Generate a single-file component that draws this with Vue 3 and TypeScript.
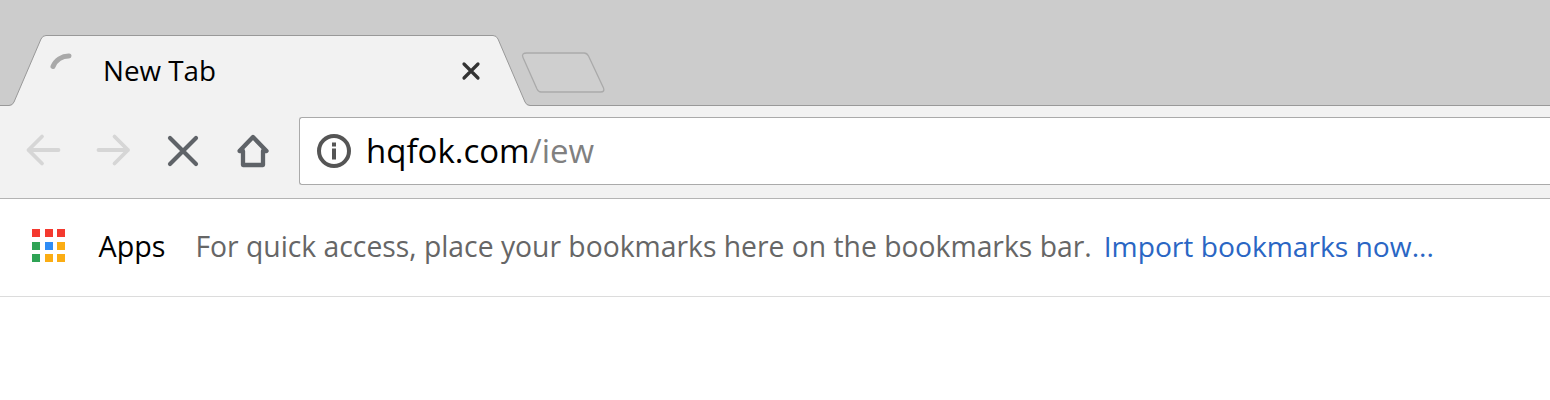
<script setup lang="ts">
const appColors: string[] = ['#f4392f','#f4392f','#f4392f','#2fa355','#2e8cf5','#fbad14','#2fa355','#fbad14','#fbad14']
</script>

<template>
  <div class="browser">
    <div class="tabstrip">
      <svg class="tabshape" width="620" height="106" viewBox="0 0 620 106">
        <path d="M0 105.5H9Q12.500 105.500 14 102L41 39Q42.500 35.500 46 35.500H493Q496.500 35.500 498 39L525 102Q526.500 105.500 530 105.500H620V107H0Z" fill="#f2f2f2"/>
        <path d="M0 105.500H9Q12.500 105.500 14 102L41 39Q42.500 35.500 46 35.500H493Q496.500 35.500 498 39L525 102Q526.500 105.500 530 105.500H620" fill="none" stroke="#999" stroke-width="1"/>
        <path d="M527 53H584Q587 53 588.500 56L603.500 88Q605 92 600.500 92H541Q538.500 92 537 89L523 57.500Q521 53 527 53Z" fill="#cfcfcf" stroke="#aaa" stroke-width="1.300"/>
        <path d="M53 66.500A17 17 0 0 1 69 56" fill="none" stroke="#a9a9a9" stroke-width="5" stroke-linecap="round"/>
      </svg>
      <div class="tabtitle">
        <span class="tabname">New Tab</span>
        <svg class="tabclose" width="20" height="20" viewBox="0 0 20 20">
          <path d="M3 3L17 17M17 3L3 17" stroke="#333" stroke-width="3.200" stroke-linecap="round"/>
        </svg>
      </div>
    </div>
    <div class="toolbar">
      <svg class="ticon" width="36" height="36" viewBox="0 0 36 36"><path d="M3.500 17H33.500M17 3.500L3.500 17L17 30.500" fill="none" stroke="#d6d6d6" stroke-width="3.800" stroke-linecap="round" stroke-linejoin="round"/></svg>
      <svg class="ticon" width="36" height="36" viewBox="0 0 36 36"><path d="M3.500 17H33M19.500 3.500L33 17L19.500 30.500" fill="none" stroke="#d6d6d6" stroke-width="3.800" stroke-linecap="round" stroke-linejoin="round"/></svg>
      <svg class="ticon" width="36" height="36" viewBox="0 0 36 36"><path d="M6 5L32 31M32 5L6 31" fill="none" stroke="#5f6368" stroke-width="4.200" stroke-linecap="round"/></svg>
      <svg class="ticon" width="36" height="36" viewBox="0 0 36 36"><path d="M8 32V18H4.500L18 4L31.500 18H28V32Z" fill="none" stroke="#5f6368" stroke-width="4.300" stroke-linejoin="round"/></svg>
      <div class="omnibox">
        <svg class="info" width="36" height="36" viewBox="0 0 36 36">
          <circle cx="18" cy="18" r="15" fill="none" stroke="#555" stroke-width="4"/>
          <rect x="16" y="15.500" width="4" height="11" fill="#555"/>
          <rect x="16" y="9.500" width="4" height="4" fill="#555"/>
        </svg>
        <span class="url"><span class="host">hqfok.com</span><span class="path">/iew</span></span>
      </div>
    </div>
    <div class="bookmarks">
      <div class="appgrid">
        <i v-for="(c, n) in appColors" :key="n" :style="{ background: c }"></i>
      </div>
      <span class="apps">Apps</span>
      <span class="hint">For quick access, place your bookmarks here on the bookmarks bar.</span>
      <span class="import">Import bookmarks now...</span>
    </div>
  </div>
</template>

<style scoped>
.browser {
  width: 1550px;
  height: 400px;
  overflow: hidden;
  background: #fff;
  font-family: "Open Sans", "Noto Sans", sans-serif;
}
.tabstrip {
  position: relative;
  height: 106px;
  background: #cccccc;
  box-sizing: border-box;
  border-bottom: 1px solid #999;
  display: flex;
  align-items: flex-start;
}
.tabshape {
  position: absolute;
  left: 0;
  top: 0;
}
.tabtitle {
  position: relative;
  display: flex;
  align-items: center;
  margin-left: 103px;
  margin-top: 51px;
  height: 40px;
}
.tabname {
  width: 358px;
  margin-top: -2px;
  font-size: 27.800px;
  line-height: 40px;
  color: #000;
}
.tabclose { display: block; }
.toolbar {
  height: 93px;
  box-sizing: border-box;
  background: #f2f2f2;
  border-bottom: 1px solid #b4b4b4;
  display: flex;
  align-items: flex-start;
  padding-left: 25px;
}
.ticon {
  flex: none;
  margin-top: 27px;
  margin-right: 34px;
}
.ticon:nth-child(3) { margin-right: 35px; margin-left: -1px; }
.ticon:nth-child(4) { margin-right: 28px; }
.omnibox {
  flex: 1;
  height: 68px;
  margin-top: 11px;
  box-sizing: border-box;
  background: #fff;
  border: 1px solid #aaa;
  border-right: none;
  border-radius: 3px 0 0 3px;
  display: flex;
  align-items: center;
  padding-left: 16px;
}
.info { flex: none; }
.url {
  margin-left: 14px;
  font-size: 33px;
  line-height: 40px;
  white-space: nowrap;
}
.host { color: #000; }
.path { color: #808080; }
.bookmarks {
  height: 98px;
  box-sizing: border-box;
  border-bottom: 1px solid #dcdcdc;
  display: flex;
  align-items: center;
  padding-left: 32px;
  white-space: nowrap;
}
.appgrid {
  display: grid;
  grid-template-columns: repeat(3, 8px);
  grid-auto-rows: 8px;
  gap: 4.500px;
  flex: none;
  margin-top: -4px;
}
.apps {
  margin-left: 33.500px;
  margin-top: -4px;
  font-size: 28.700px;
  color: #000;
}
.hint {
  margin-left: 30px;
  margin-top: -4px;
  font-size: 28.300px;
  color: #666;
}
.import {
  margin-left: 12px;
  margin-top: -4px;
  font-size: 28.200px;
  color: #2a66c4;
}
</style>
